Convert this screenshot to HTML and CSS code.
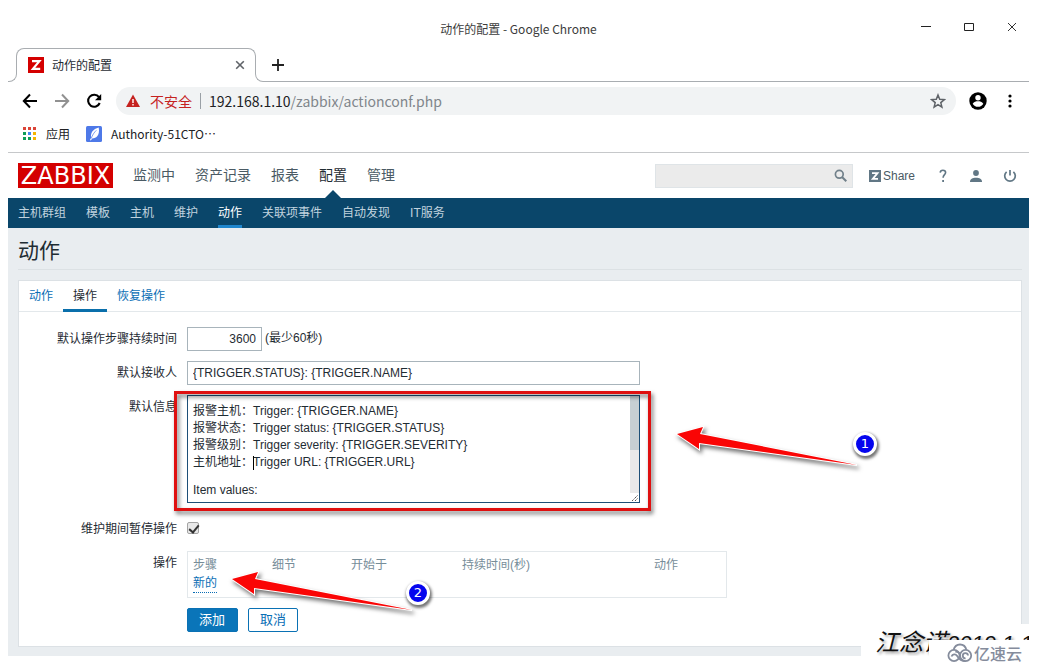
FILE: index.html
```html
<!DOCTYPE html>
<html lang="zh-CN">
<head>
<meta charset="utf-8">
<title>动作的配置</title>
<link rel="stylesheet" href="styles.css">
</head>
<body>
<div class="window">
  <header class="titlebar">
    <div class="window-title">动作的配置 - Google Chrome</div>
    <div class="window-controls">
      <button type="button" aria-label="最小化"><svg width="12" height="12" viewBox="0 0 12 12"><path d="M1 4.500h10" stroke="#222"/></svg></button>
      <button type="button" aria-label="最大化"><svg width="12" height="12" viewBox="0 0 12 12"><path d="M1.500 1.500h9v7h-9z" stroke="#222" fill="none"/></svg></button>
      <button type="button" aria-label="关闭"><svg width="12" height="12" viewBox="0 0 12 12"><path d="M2 1l8 8M10 1l-8 8" stroke="#333" fill="none"/></svg></button>
    </div>
  </header>

  <div class="tabstrip">
    <div class="tab-edge tab-edge-left"></div>
    <div class="browser-tab">
      <svg width="16" height="16" viewBox="0 0 16 16"><path fill="#d40000" d="M0 0h16v16H0z"/><path fill="none" stroke="#fff" stroke-width="2.200" d="M4 4.200h7.400L5 11.800h7.200"/></svg>
      <span class="tab-title">动作的配置</span>
      <button type="button" aria-label="关闭标签页"><svg width="10" height="10" viewBox="0 0 10 10"><path d="M1.200 1.200l7.600 7.600M8.800 1.200L1.200 8.800" stroke="#5f6368" stroke-width="1.600"/></svg></button>
    </div>
    <div class="tab-edge tab-edge-right"></div>
    <div class="tab-rest">
      <button type="button" aria-label="新标签页"><svg width="12" height="12" viewBox="0 0 12 12"><path d="M6 0v12M0 6h12" stroke="#222" stroke-width="1.800"/></svg></button>
    </div>
  </div>

  <div class="toolbar">
    <button type="button" aria-label="后退"><svg width="16" height="16" viewBox="0 0 16 16"><path d="M15 8H2M8 1.500L1.800 8 8 14.500" fill="none" stroke="#000" stroke-width="2"/></svg></button>
    <button type="button" aria-label="前进"><svg width="16" height="16" viewBox="0 0 16 16"><path d="M1 8h13M8 1.500L14.200 8 8 14.500" fill="none" stroke="#919191" stroke-width="2"/></svg></button>
    <button type="button" aria-label="重新加载"><svg width="16" height="16" viewBox="0 0 16 16"><path d="M13 4.200A6 6 0 1 0 13.700 10" fill="none" stroke="#000" stroke-width="2.100"/><path d="M15.200 1v6.200H9z"/></svg></button>
    <div class="omnibox">
      <svg width="14" height="14" viewBox="0 0 14 14"><path fill="#c5221f" d="M7 .5l7 12.500H0z"/><path fill="#fff" d="M6.300 5h1.400v4H6.300zM6.300 10h1.400v1.400H6.300z"/></svg>
      <span class="insecure">不安全</span>
      <span class="url"><span class="host">192.168.1.10</span>/zabbix/actionconf.php</span>
      <svg class="star" width="16" height="16" viewBox="0 0 16 16"><path fill="none" stroke="#5f6368" stroke-width="1.500" d="M8 2l1.700 4.300 4.600.3-3.500 3 1.100 4.500L8 11.700l-3.900 2.400 1.100-4.500-3.500-3 4.600-.3z"/></svg>
    </div>
    <button type="button" class="profile" aria-label="个人资料"><svg width="18" height="18" viewBox="0 0 18 18"><circle cx="9" cy="9" r="8.700"/><circle cx="9" cy="5.800" r="2.700" fill="#fff"/><path fill="#fff" d="M3.700 11.700c1.300-2 3.200-2.500 5.300-2.500s4 .5 5.300 2.500c-1.100 1.900-3 3.100-5.300 3.100s-4.200-1.200-5.300-3.100z"/></svg></button>
    <button type="button" class="more" aria-label="更多"><svg width="4" height="14" viewBox="0 0 4 14"><circle cx="2" cy="2" r="1.600"/><circle cx="2" cy="7" r="1.600"/><circle cx="2" cy="12" r="1.600"/></svg></button>
  </div>

  <nav class="bookmarks">
    <a href="#"><svg width="14" height="14" viewBox="0 0 14 14"><path fill="#db4437" d="M0 0h3v3H0zM5 0h3v3H5zM10 0h3v3h-3z"/><path fill="#0f9d58" d="M0 5h3v3H0zM0 10h3v3H0zM5 10h3v3H5z"/><path fill="#4285f4" d="M5 5h3v3H5z"/><path fill="#f4b400" d="M10 5h3v3h-3zM10 10h3v3h-3z"/></svg><span>应用</span></a>
    <a href="#"><svg width="16" height="16" viewBox="0 0 16 16"><rect width="16" height="16" rx="1.500" fill="#4e79e8"/><path fill="#fff" d="M12.700 1.600c.8 3.800 0 7-1.500 8.700-1.200 1.400-3 2-4.600 2L4.700 14.400l-.7-.3 1.200-2.600C4.300 7 7 3.200 12.700 1.600z"/><path d="M5.200 12.600C6.300 9 8.300 6.300 10.400 4.300" fill="none" stroke="#4e79e8" stroke-width=".7"/></svg><span>Authority-51CTO⋯</span></a>
  </nav>

  <div class="site-head">
    <a class="logo" href="#">ZABBIX</a>
    <nav class="main-nav">
      <a href="#">监测中</a><a href="#">资产记录</a><a href="#">报表</a><a class="active" href="#">配置</a><a href="#">管理</a>
    </nav>
    <div class="search">
      <input type="text" aria-label="搜索">
      <svg width="14" height="14" viewBox="0 0 14 14"><circle cx="5.300" cy="5.300" r="3.900" fill="none" stroke="#71808a" stroke-width="1.700"/><path d="M8 8l4.300 4.300" stroke="#71808a" stroke-width="2"/></svg>
    </div>
    <a class="share" href="#"><svg width="12" height="12" viewBox="0 0 12 12"><path fill="#617785" d="M0 0h12v12H0z"/><path fill="none" stroke="#fff" stroke-width="1.800" d="M3 3.200h5.500L3.800 8.800H9"/></svg>Share</a>
    <a class="util" href="#" aria-label="帮助"><svg width="8" height="14" viewBox="0 0 8 14"><path d="M1.200 3.600C1.300 1.900 2.500 1.200 3.900 1.200c1.600 0 2.700.9 2.700 2.300 0 2.100-2.500 2.300-2.500 5.300" fill="none" stroke="#617785" stroke-width="1.600"/><path fill="#617785" d="M3.200 11h1.800v1.900H3.200z"/></svg></a>
    <a class="util" href="#" aria-label="用户"><svg width="12" height="12" viewBox="0 0 12 12"><circle cx="6" cy="3" r="2.900" fill="#617785"/><path fill="#617785" d="M0 12c0-3.200 2.500-4.200 6-4.200s6 1 6 4.200z"/></svg></a>
    <a class="util" href="#" aria-label="退出"><svg width="14" height="14" viewBox="0 0 14 14"><path d="M3.600 2.800A5.300 5.300 0 1 0 10.400 2.800M7 1v5.500" fill="none" stroke="#617785" stroke-width="1.700"/></svg></a>
  </div>
  <nav class="sub-nav">
    <a href="#">主机群组</a><a href="#">模板</a><a href="#">主机</a><a href="#">维护</a><a class="active" href="#">动作</a><a href="#">关联项事件</a><a href="#">自动发现</a><a href="#">IT服务</a>
  </nav>

  <main class="page">
    <h1>动作</h1>
    <form class="panel" onsubmit="return false">
      <div class="form-tabs">
        <a href="#">动作</a><a class="active" href="#">操作</a><a href="#">恢复操作</a>
      </div>
      <div class="rows">
        <label for="period">默认操作步骤持续时间</label>
        <div class="field"><input id="period" class="text short" type="text" value="3600"><span class="hint">(最少60秒)</span></div>

        <label for="subject">默认接收人</label>
        <div class="field"><input id="subject" class="text wide" type="text" value="{TRIGGER.STATUS}: {TRIGGER.NAME}"></div>

        <label for="message">默认信息</label>
        <div class="field message">
          <textarea id="message" spellcheck="false">报警主机：Trigger: {TRIGGER.NAME}
报警状态：Trigger status: {TRIGGER.STATUS}
报警级别：Trigger severity: {TRIGGER.SEVERITY}
主机地址：Trigger URL: {TRIGGER.URL}

Item values:</textarea>
          <span class="caret"></span>
          <span class="scrollbar"><span class="thumb"></span><svg width="9" height="9" viewBox="0 0 9 9"><path d="M2 8l6-6M5 8l3-3" stroke="#555" stroke-width="1" stroke-dasharray="1.500 .6"/></svg></span>
          <span class="highlight"></span>
          <svg class="arrow arrow-one" width="190" height="46" viewBox="0 0 190 46"><path d="M2 10L28 3l-3 7 157 31L24 19v6z"/></svg>
          <span class="badge badge-one">1</span>
        </div>

        <label for="pause">维护期间暂停操作</label>
        <div class="field"><input id="pause" class="check" type="checkbox" checked></div>

        <span class="label">操作</span>
        <div class="field operations">
          <table>
            <thead><tr><th class="c-step">步骤</th><th class="c-detail">细节</th><th class="c-start">开始于</th><th class="c-duration">持续时间(秒)</th><th>动作</th></tr></thead>
            <tbody><tr><td colspan="5"><a class="new" href="#">新的</a></td></tr></tbody>
          </table>
          <svg class="arrow arrow-two" width="190" height="46" viewBox="0 0 190 46"><path d="M2 10L28 3l-3 7 157 31L24 19v6z"/></svg>
          <span class="badge badge-two">2</span>
        </div>

        <div class="buttons"><button type="submit" class="btn primary">添加</button><button type="button" class="btn">取消</button></div>
      </div>
    </form>
  </main>
  <div class="signature">江念诺<span class="date">2019.1.1</span></div>
</div>
<div class="brand">
  <svg width="26" height="20" viewBox="0 0 26 20"><g fill="none" stroke="#858c9c" stroke-width="1.800"><circle cx="7" cy="12.500" r="5.600"/><circle cx="18.600" cy="12.500" r="5.600"/><path d="M6.500 7C7.500 3.500 10 1.500 13 1.500c3.300 0 5.700 2.200 6.400 5.400M4.500 13.500c1-2.500 4-3 5.500-.8 1.800 3 4.300 5.400 8.600 5.400M13.300 13c.5-3.500-3-4.500-5-4.500M21 12.500a2.600 2.600 0 1 0-2.400 2.800"/></g></svg>
  <span>亿速云</span>
</div>
</body>
</html>
```
FILE: styles.css
```css
* { box-sizing: border-box; }
body {
  margin: 8px 9px 0 8px;
  background: #fff;
  color: #1f2c33;
  font: 12px "Liberation Sans", "Noto Sans CJK SC", sans-serif;
}
svg { display: block; flex: none; }
a { text-decoration: none; color: #0a6eb5; }
button { padding: 0; border: 0; background: none; font-family: inherit; }
.window {
  position: relative;
  background: #fff;
  box-shadow: 0 2px 8px rgba(0, 0, 0, .12);
}

.titlebar, .tabstrip, .toolbar, .bookmarks { font-family: "Noto Sans CJK SC", sans-serif; }
.titlebar { position: relative; height: 40px; display: flex; align-items: center; justify-content: center; }
.window-title { color: #3c3c3c; font-size: 12px; }
.window-controls { position: absolute; right: 11px; top: 14px; display: flex; gap: 31px; }

.tabstrip { display: flex; height: 34px; }
.tab-edge { width: 8px; border-bottom: 1px solid #a9adb1; }
.tab-edge-left { border-right: 1px solid #a9adb1; border-bottom-right-radius: 8px; margin-top: 12px; margin-right: -1px; width: 9px; }
.tab-edge-right { border-left: 1px solid #a9adb1; border-bottom-left-radius: 8px; margin-top: 12px; margin-left: -1px; }
.browser-tab {
  width: 240px;
  height: 26px;
  display: flex;
  align-items: center;
  padding: 6px 10px 0 11px;
  border: 1px solid #a9adb1;
  border-bottom: 0;
  border-radius: 8px 8px 0 0;
}
.tab-title { flex: 1; margin-left: 8px; font-size: 12px; line-height: 16px; }
.tab-rest { flex: 1; padding: 9px 0 0 9px; border-bottom: 1px solid #a9adb1; }

.toolbar { height: 37px; display: flex; align-items: center; padding: 0 17px 0 14px; gap: 16px; }
.omnibox {
  flex: 1;
  height: 28px;
  margin-left: -2px;
  display: flex;
  align-items: center;
  padding: 0 10px;
  border-radius: 14px;
  background: #f1f3f4;
  font-size: 14px;
  line-height: 16px;
}
.insecure { margin-left: 10px; padding-right: 8px; border-right: 1px solid #9aa0a6; color: #c5221f; }
.url { flex: 1; margin-left: 8px; color: #80868b; }
.host { color: #202124; }
.profile { margin-left: -3px; }
.more { margin-left: 5px; }
.bookmarks { height: 34px; display: flex; align-items: center; gap: 16px; padding: 0 15px 4px; border-bottom: 1px solid #c6c8ca; }
.bookmarks a { display: flex; align-items: center; gap: 9px; color: #202124; line-height: 16px; }

.site-head { height: 45px; display: flex; align-items: center; padding: 0 12px 0 10px; }
.logo { width: 95px; height: 25px; background: #d40000; color: #fff; font: 24px/27px "DejaVu Sans", sans-serif; text-align: center; }
.main-nav { flex: 1; display: flex; gap: 20px; margin-left: 20px; font-size: 14px; align-self: stretch; }
.main-nav a { position: relative; line-height: 44px; color: #4a5a64; }
.main-nav .active { color: #1f2c33; }
.main-nav .active::after {
  content: "";
  position: absolute;
  left: 50%;
  bottom: 0;
  margin-left: -8px;
  border: 8px solid transparent;
  border-top: 0;
  border-bottom-color: #0a466a;
}
.search { position: relative; width: 198px; }
.search input { display: block; width: 100%; height: 24px; border: 1px solid #dfe4e7; background: #ebebeb; }
.search svg { position: absolute; right: 5px; top: 5px; }
.share { display: flex; align-items: center; gap: 2px; margin-left: 16px; color: #4a5a64; }
.util { margin-left: 24px; }
.util + .util { margin-left: 23px; }
.util:last-child { margin-left: 21px; }

.sub-nav { height: 30px; display: flex; gap: 20px; padding: 0 10px; background: #0a466a; }
.sub-nav a { height: 30px; line-height: 30px; color: #c0d3df; }
.sub-nav .active { color: #fff; border-bottom: 3px solid #1f86cd; }

.page { padding: 0 7px 9px 10px; background: #e9edf0; }
h1 { margin: 0 0 10px; height: 42px; border-bottom: 1px solid #dce1e4; font-size: 21px; font-weight: 400; line-height: 46px; }
.panel { background: #fff; border: 1px solid #dce1e5; }
.form-tabs { display: flex; height: 31px; border-bottom: 1px solid #e3e8eb; }
.form-tabs a { height: 31px; padding: 0 10px; line-height: 31px; }
.form-tabs .active { color: #1f2c33; border-bottom: 3px solid #0a6fab; }
.rows { display: grid; grid-template-columns: 158px 1fr; gap: 10px; padding: 15px 0 14px; }
.rows label, .label { line-height: 24px; text-align: right; white-space: nowrap; }
.field { position: relative; display: flex; align-items: center; gap: 3px; justify-self: start; min-height: 24px; }
.hint { line-height: 22px; margin-bottom: 2px; }
.text, textarea { border: 1px solid #a8b4bb; color: #1f2c33; font: inherit; background: #fff; }
.text { height: 24px; padding: 0 5px; }
.short { width: 75px; text-align: right; }
.wide { width: 453px; }
.message { margin-bottom: 4px; }
textarea { display: block; width: 453px; height: 108px; padding: 5px; border-color: #1d4f77; resize: none; overflow: hidden; outline: 0; }
.caret { position: absolute; left: 66px; top: 61px; width: 1px; height: 14px; background: #000; }
.scrollbar { position: absolute; right: 1px; top: 1px; bottom: 1px; width: 9px; background: #e9e9e9; display: flex; flex-direction: column; justify-content: space-between; }
.scrollbar svg { background: #fff; }
.thumb { height: 54px; background: #c7cfd3; }
.highlight { position: absolute; top: -4px; right: -11px; bottom: -8px; left: -13px; border: 3px solid #df1010; filter: drop-shadow(2px 3px 2px rgba(0, 0, 0, .55)); }
.arrow { position: absolute; overflow: visible; filter: drop-shadow(2px 3px 2px rgba(0, 0, 0, .55)); }
.arrow path { fill: #fa0505; stroke: #fff; stroke-width: 2; paint-order: stroke; }
.arrow-one { left: 488px; top: 29px; }
.arrow-two { left: 43px; top: 18px; }
.badge {
  position: absolute;
  width: 24px;
  height: 24px;
  border: 3px solid #fff;
  border-radius: 50%;
  background: #0505ee;
  color: #fff;
  font: 13px/18px "DejaVu Sans", sans-serif;
  text-align: center;
  box-shadow: 1px 2px 3px 1px rgba(0, 0, 0, .55);
}
.badge-one { left: 666px; top: 37px; }
.badge-two { left: 219px; top: 30px; }
.check {
  appearance: none;
  width: 12px;
  height: 12px;
  margin: 0 0 2px;
  border: 1px solid #a4a4a4;
  border-radius: 2px;
  background: #e8e8e8;
}
.check:checked::after { content: ""; display: block; width: 4px; height: 8px; margin: 0 0 0 3px; border: solid #333; border-width: 0 2px 2px 0; transform: rotate(40deg); }
.operations { width: 540px; }
table { width: 100%; border: 1px solid #e3e8eb; border-spacing: 0; table-layout: fixed; }
th, td { padding: 0 5px; height: 18px; line-height: 18px; font-weight: 400; text-align: left; }
th { height: 22px; padding-top: 4px; color: #768d99; }
td { height: 23px; padding-bottom: 4px; }
.c-step, .c-detail { width: 79px; }
.c-start { width: 111px; }
.c-duration { width: 192px; }
.new { display: inline-block; border-bottom: 1px dotted #0a6eb5; }
.buttons { grid-column: 2; display: flex; gap: 10px; }
.btn { height: 24px; padding: 0 11px; border: 1px solid #0a71b4; border-radius: 2px; color: #0a6eb5; background: #fff; font-size: 13px; line-height: 22px; }
.primary { padding: 0 12px 0 11px; background: #0a75b9; color: #fff; }

.signature {
  position: absolute;
  right: -9px;
  bottom: 0;
  width: 177px;
  height: 32px;
  padding-left: 14px;
  background: #fff;
  color: #111;
  font: italic 24px/38px "Liberation Sans", "Noto Sans CJK SC", sans-serif;
  white-space: nowrap;
  text-shadow: 2px 2px 3px #999;
}
.date { font-size: 22px; }
.brand {
  position: fixed;
  right: 0;
  bottom: 0;
  width: 109px;
  height: 25px;
  display: flex;
  align-items: center;
  gap: 1px;
  padding-left: 18px;
  background: #fff;
  color: #858c9c;
  font: 500 16px/24px "Noto Sans CJK SC", sans-serif;
}
```
